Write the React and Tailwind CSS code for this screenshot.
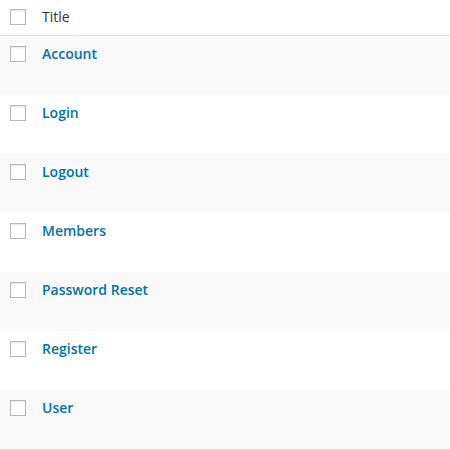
export default function App() {
  const rows = ["Account", "Login", "Logout", "Members", "Password Reset", "Register", "User"];
  return (
    <div className="w-[450px] h-[450px] bg-white overflow-hidden" style={{ fontFamily: '"Open Sans", sans-serif' }}>
      <div className="h-[36px] flex items-start border-b border-[#e1e1e1]">
        <div className="pl-[10px] pt-[9px] w-[42px] shrink-0">
          <div className="w-4 h-4 border border-[#b4b9be] bg-white shadow-[inset_0_1px_2px_rgba(0,0,0,0.1)]" />
        </div>
        <div className="pt-[7px] text-[14px] leading-[20px] text-[#32373c]">Title</div>
      </div>
      {rows.map((r, i) => (
        <div key={r} className={`h-[59px] flex items-start ${i % 2 === 0 ? "bg-[#f9f9f9]" : "bg-white"}`}>
          <div className="pl-[10px] pt-[10px] w-[42px] shrink-0">
            <div className="w-4 h-4 border border-[#b4b9be] bg-white shadow-[inset_0_1px_2px_rgba(0,0,0,0.1)]" />
          </div>
          <div className="pt-[7px] text-[14px] leading-[21px] font-semibold text-[#0073aa]">{r}</div>
        </div>
      ))}
      <div className="border-t border-[#e1e1e1]" />
    </div>
  );
}
